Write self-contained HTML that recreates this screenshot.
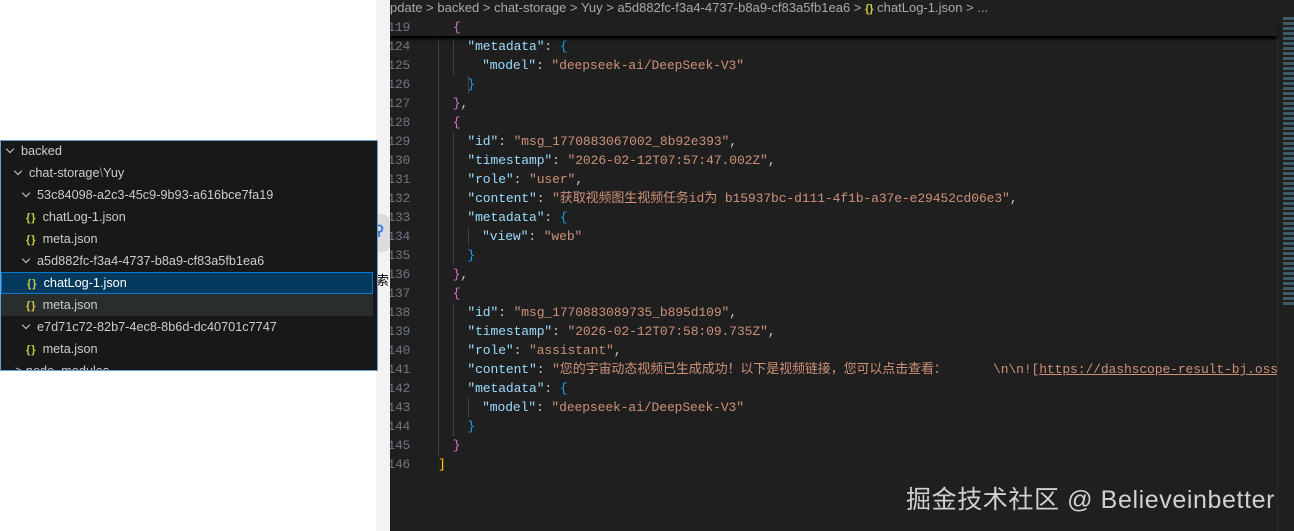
<!DOCTYPE html>
<html><head><meta charset="utf-8"><style>
*{margin:0;padding:0;box-sizing:border-box}
body{width:1294px;height:531px;background:#fff;position:relative;overflow:hidden;font-family:"Liberation Sans","Noto Sans CJK SC",sans-serif}
#strip{position:absolute;left:376px;top:0;width:14px;height:531px;background:#f3f3f3}
#ed{position:absolute;left:390px;top:0;width:904px;height:531px;background:#1f1f1f;overflow:hidden}
#bc{position:absolute;left:0;top:0;height:17px;width:904px;color:#a9a9a9;font-size:13px;line-height:15px;white-space:nowrap;padding-left:0}
.ln{position:absolute;left:-30px;width:50px;text-align:right;color:#6e7681;font:13px/19px "Liberation Mono",monospace;letter-spacing:-0.3px}
.cd{position:absolute;left:48px;white-space:nowrap;font:13px/19px "Liberation Mono","Noto Sans CJK SC",monospace;letter-spacing:-0.1px;color:#cccccc}
.k{color:#9cdcfe}.s{color:#ce9178}.p{color:#da70d6}.b{color:#179fff}.y{color:#ffd700}
.u{text-decoration:underline}
.g{position:absolute;width:1px;background:#404040}
#sticky{position:absolute;left:0;top:17px;width:887px;height:19px;background:#1f1f1f;box-shadow:0 3px 3px #000;z-index:2}
#mm{position:absolute;left:893px;top:17px;width:11px;height:290px;background:repeating-linear-gradient(#3d5a66 0 3px,#1f1f1f 3px 5px)}
#sb{position:absolute;left:887px;top:17px;width:1px;height:514px;background:#2b2b2b}
#pop{position:absolute;left:0;top:140px;width:378px;height:231px;background:#181818;border:1px solid #6a9fd0;overflow:hidden;font-size:12.7px;color:#cccccc}
.r{position:absolute;left:0;width:372px;height:22px;line-height:22px;white-space:nowrap}
.ic{color:#cbcb41;font-weight:bold;font-size:11px;letter-spacing:1px;margin-right:6px}
.ch{display:inline-block;width:6px;height:6px;border-right:1.3px solid #ccc;border-bottom:1.3px solid #ccc;transform:rotate(45deg);margin:0 8px 3px 0}
#wm{position:absolute;left:906px;top:480px;font-size:25px;color:#d0d0d0;white-space:nowrap;letter-spacing:0.6px}
</style></head><body>
<div id="strip"><div style="position:absolute;top:214px;left:0;width:14px;height:38px;background:#dcdcdc;border-radius:0 8px 8px 0"></div><div style="position:absolute;top:222px;left:-2px;color:#2c7be5;font-size:14px;font-weight:bold">&#x26B2;</div><div style="position:absolute;top:270px;left:0;color:#000;font-size:13px;font-family:'Noto Sans CJK SC',sans-serif">索</div></div>
<div id="ed">
<div id="bc">pdate <span>&gt;</span> backed &gt; chat-storage &gt; Yuy &gt; a5d882fc-f3a4-4737-b8a9-cf83a5fb1ea6 &gt; <span style="color:#cbcb41;font-weight:bold;font-size:11px">{}</span> chatLog-1.json &gt; ...</div>
<div id="sticky"><div class="ln" style="top:1px">119</div><div class="cd" style="top:1px;padding-left:15px"><span class="p">{</span></div></div>
<div class="g" style="left:48px;top:37px;height:418px"></div>
<div class="g" style="left:63px;top:37px;height:38px"></div>
<div class="g" style="left:78px;top:75px;height:19px"></div>
<div class="g" style="left:63px;top:132px;height:133px"></div>
<div class="g" style="left:78px;top:227px;height:19px"></div>
<div class="g" style="left:63px;top:303px;height:133px"></div>
<div class="g" style="left:78px;top:398px;height:19px"></div>
<div id="lines"></div>
<div id="sb"></div><div id="mm"></div>
</div>
<div id="pop">
<div class="r" style="top:-1px;padding-left:6px"><span class="ch"></span>backed</div>
<div class="r" style="top:21px;padding-left:14px"><span class="ch"></span>chat-storage<span style="color:#888">\</span>Yuy</div>
<div class="r" style="top:43px;padding-left:22px"><span class="ch"></span>53c84098-a2c3-45c9-9b93-a616bce7fa19</div>
<div class="r" style="top:65px;padding-left:25px"><span class="ic">{}</span>chatLog-1.json</div>
<div class="r" style="top:87px;padding-left:25px"><span class="ic">{}</span>meta.json</div>
<div class="r" style="top:109px;padding-left:22px"><span class="ch"></span>a5d882fc-f3a4-4737-b8a9-cf83a5fb1ea6</div>
<div class="r" style="top:131px;padding-left:25px;background:#04395e;border:1px solid #0078d4;line-height:20px;color:#fff"><span class="ic">{}</span>chatLog-1.json</div>
<div class="r" style="top:153px;padding-left:25px;background:#2a2d2e"><span class="ic">{}</span>meta.json</div>
<div class="r" style="top:175px;padding-left:22px"><span class="ch"></span>e7d71c72-82b7-4ec8-8b6d-dc40701c7747</div>
<div class="r" style="top:197px;padding-left:25px"><span class="ic">{}</span>meta.json</div>
<div class="r" style="top:219px;padding-left:14px">&gt; node_modules</div>
</div>
<div id="wm">掘金技术社区 @ Believeinbetter</div>
<script>
var L=[
[124,2,'<span class="k">"metadata"</span>: <span class="b">{</span>'],
[125,3,'<span class="k">"model"</span>: <span class="s">"deepseek-ai/DeepSeek-V3"</span>'],
[126,2,'<span class="b">}</span>'],
[127,1,'<span class="p">}</span>,'],
[128,1,'<span class="p">{</span>'],
[129,2,'<span class="k">"id"</span>: <span class="s">"msg_1770883067002_8b92e393"</span>,'],
[130,2,'<span class="k">"timestamp"</span>: <span class="s">"2026-02-12T07:57:47.002Z"</span>,'],
[131,2,'<span class="k">"role"</span>: <span class="s">"user"</span>,'],
[132,2,'<span class="k">"content"</span>: <span class="s">"获取视频图生视频任务id为 b15937bc-d111-4f1b-a37e-e29452cd06e3"</span>,'],
[133,2,'<span class="k">"metadata"</span>: <span class="b">{</span>'],
[134,3,'<span class="k">"view"</span>: <span class="s">"web"</span>'],
[135,2,'<span class="b">}</span>'],
[136,1,'<span class="p">}</span>,'],
[137,1,'<span class="p">{</span>'],
[138,2,'<span class="k">"id"</span>: <span class="s">"msg_1770883089735_b895d109"</span>,'],
[139,2,'<span class="k">"timestamp"</span>: <span class="s">"2026-02-12T07:58:09.735Z"</span>,'],
[140,2,'<span class="k">"role"</span>: <span class="s">"assistant"</span>,'],
[141,2,'<span class="k">"content"</span>: <span class="s">"您的宇宙动态视频已生成成功！以下是视频链接，您可以点击查看：&nbsp;&nbsp;&nbsp;&nbsp;&nbsp;&nbsp;\\n\\n![<span class="u">https://dashscope-result-bj.oss-cn-beijing</span></span>'],
[142,2,'<span class="k">"metadata"</span>: <span class="b">{</span>'],
[143,3,'<span class="k">"model"</span>: <span class="s">"deepseek-ai/DeepSeek-V3"</span>'],
[144,2,'<span class="b">}</span>'],
[145,1,'<span class="p">}</span>'],
[146,0,'<span class="y">]</span>']];
var h='';L.forEach(function(l){var t=37+(l[0]-124)*19;
h+='<div class="ln" style="top:'+t+'px">'+l[0]+'</div><div class="cd" style="top:'+t+'px;padding-left:'+(l[1]*14.7)+'px">'+l[2]+'</div>';});
document.getElementById('lines').innerHTML=h;
</script>
<style>#lines .cd{max-width:839px;overflow:hidden}</style>
</body></html>
